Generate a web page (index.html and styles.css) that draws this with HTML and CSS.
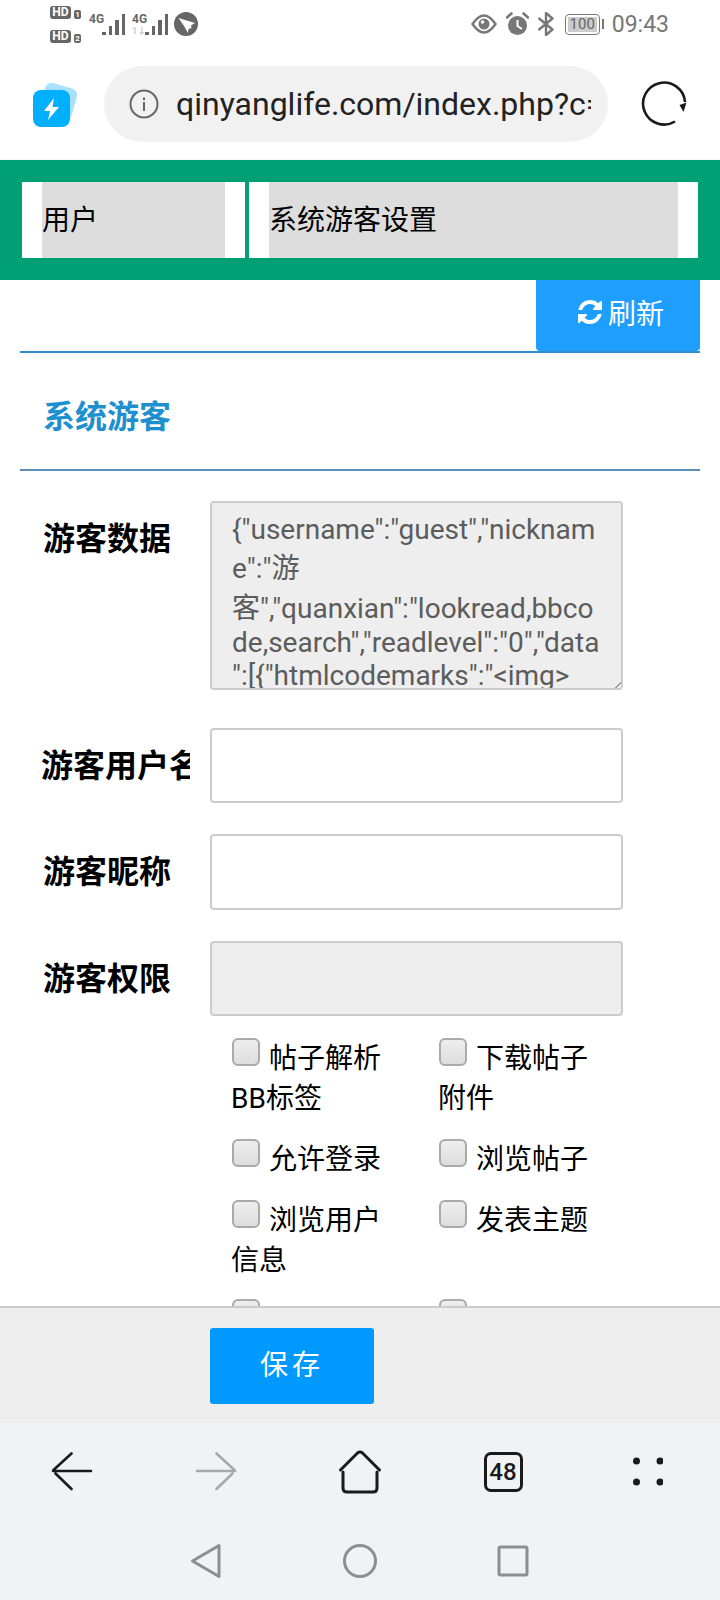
FILE: index.html

```html
<!DOCTYPE html>
<html lang="zh-CN">
<head>
  <meta charset="UTF-8">
  <meta name="viewport" content="width=device-width, initial-scale=1.0">
  <title>系统游客设置</title>
  <link rel="stylesheet" href="styles.css">
</head>
<body>
  <div class="phone">
    <!-- Android status bar -->
    <div class="status-bar">
      <div class="status-left">
        <div class="sims">
          <div class="sim"><span class="hd">HD</span><span class="sim-no">1</span></div>
          <div class="sim"><span class="hd">HD</span><span class="sim-no">2</span></div>
        </div>
        <div class="signal">
          <div class="signal-text"><span>4G</span></div>
          <div class="bars"><i class="b1"></i><i class="b2"></i><i class="b3"></i><i class="b4"></i></div>
        </div>
        <div class="signal">
          <div class="signal-text"><span>4G</span><span class="updown">1↓</span></div>
          <div class="bars"><i class="b1"></i><i class="b2"></i><i class="b3"></i><i class="b4"></i></div>
        </div>
        <svg class="app-dot" width="24" height="24" viewBox="0 0 24 24">
          <circle cx="12" cy="12" r="12" fill="#666"/>
          <path d="M4.500 6 L21 11 L17 13.500 L17.500 16 L14.500 17 L14 21 L10 14 Z" fill="#fff"/>
        </svg>
      </div>
      <div class="status-right">
        <svg width="26" height="20" viewBox="0 0 26 20">
          <path d="M1.500 10 C6 3.500 9.500 1.500 13 1.500 S20 3.500 24.500 10 C20 16.500 16.500 18.500 13 18.500 S6 16.500 1.500 10 Z" fill="none" stroke="#777" stroke-width="2.400"/>
          <circle cx="13" cy="10" r="5.500" fill="#777"/>
          <circle cx="11.500" cy="8" r="1.800" fill="#fff"/>
        </svg>
        <svg class="alarm" width="23" height="24" viewBox="0 0 23 24">
          <circle cx="11.500" cy="13.500" r="9.500" fill="#777"/>
          <path d="M11.500 8 V14 L16 17" fill="none" stroke="#fff" stroke-width="2"/>
          <path d="M1 5.500 L5.500 1.500 M22 5.500 L17.500 1.500" stroke="#777" stroke-width="2.600" stroke-linecap="round"/>
        </svg>
        <svg class="bt" width="18" height="24" viewBox="0 0 18 24">
          <path d="M1.500 6 L15.500 17.500 L9 23 V1 L15.500 6.500 L1.500 18" fill="none" stroke="#777" stroke-width="2.400" stroke-linejoin="round"/>
        </svg>
        <div class="battery"><span class="battery-level">100</span></div>
        <span class="battery-nub"></span>
        <span class="clock">09:43</span>
      </div>
    </div>

    <!-- browser address bar -->
    <div class="browser-bar">
      <svg class="logo" width="46" height="44" viewBox="0 0 46 44">
        <rect x="9" y="2" width="33" height="33" rx="7" fill="#a9dfff" transform="rotate(16 25 18)"/>
        <rect x="0" y="7" width="37" height="37" rx="8" fill="#00b0ff"/>
        <path d="M21 15 L11 28 H17 L15 37 L26 24 H19.500 Z" fill="#fff"/>
      </svg>
      <div class="url-pill">
        <svg class="info" width="30" height="30" viewBox="0 0 30 30">
          <circle cx="15" cy="15" r="13.500" fill="none" stroke="#666" stroke-width="2"/>
          <rect x="14" y="13" width="2" height="9" fill="#666"/>
          <rect x="14" y="8.500" width="2" height="2.500" fill="#666"/>
        </svg>
        <div class="url">qinyanglife.com/index.php?c=user</div>
      </div>
      <svg class="reload" width="48" height="48" viewBox="0 0 48 48">
        <path d="M35 41.500 A21 21 0 1 1 45 22" fill="none" stroke="#1a1a1a" stroke-width="2.600"/>
        <path d="M39.500 25 L46.500 22.500 L43.500 32 Z" fill="#1a1a1a"/>
      </svg>
    </div>

    <div class="page">
      <div class="tabs">
        <div class="tab tab-user"><div class="tab-inner">用户</div></div>
        <div class="tab tab-setting"><div class="tab-inner">系统游客设置</div></div>
      </div>

      <div class="toolbar">
        <div class="refresh-btn">
          <svg width="24" height="24" viewBox="0 0 1536 1536"><path fill="#fff" d="M1511 928q0 5-1 7-64 268-268 434.500T764 1536q-146 0-282.500-55T238 1324l-129 129q-19 19-45 19t-45-19-19-45V960q0-26 19-45t45-19h448q26 0 45 19t19 45-19 45l-137 137q71 66 161 102t187 36q134 0 250-65t186-179q11-17 53-117 8-23 30-23h192q13 0 22.500 9.500t9.500 22.500zm25-800v448q0 26-19 45t-45 19h-448q-26 0-45-19t-19-45 19-45l138-138Q969 256 768 256q-134 0-250 65T332 500q-11 17-53 117-8 23-30 23H50q-13 0-22.500-9.500T18 608v-7q65-268 270-434.500T768 0q146 0 284 55.500T1297 212l130-129q19-19 45-19t45 19 19 45z"/></svg>
          <span>刷新</span>
        </div>
      </div>

      <h2 class="section-title">系统游客</h2>

      <div class="form">
        <div class="form-row">
          <label class="form-label">游客数据</label>
          <textarea class="field field-area" readonly>{"username":"guest","nickname":"游客","quanxian":"lookread,bbcode,search","readlevel":"0","data":[{"htmlcodemarks":"&lt;img&gt; src=\"\" alt=\"\"","ubbcodemarks":"[img]"}]}</textarea>
        </div>
        <div class="form-row">
          <label class="form-label form-label-long">游客用户名</label>
          <input class="field" type="text">
        </div>
        <div class="form-row">
          <label class="form-label">游客昵称</label>
          <input class="field" type="text">
        </div>
        <div class="form-row">
          <label class="form-label">游客权限</label>
          <input class="field field-readonly" type="text" readonly>
        </div>

        <div class="checks">
          <label class="check"><input type="checkbox">帖子解析BB标签</label>
          <label class="check"><input type="checkbox">下载帖子附件</label>
          <label class="check"><input type="checkbox">允许登录</label>
          <label class="check"><input type="checkbox">浏览帖子</label>
          <label class="check"><input type="checkbox">浏览用户信息</label>
          <label class="check"><input type="checkbox">发表主题</label>
          <label class="check"><input type="checkbox"></label>
          <label class="check"><input type="checkbox"></label>
        </div>
      </div>
    </div>

    <div class="save-bar">
      <button class="save-btn">保存</button>
    </div>

    <!-- browser toolbar -->
    <div class="browser-nav">
      <div class="nav-item">
        <svg width="44" height="40" viewBox="0 0 44 40">
          <path d="M3 19 H41 M21.500 1.500 L3.500 18 M5.500 21.500 L21.500 37" fill="none" stroke="#1a1a1a" stroke-width="2.600" stroke-linecap="round"/>
        </svg>
      </div>
      <div class="nav-item">
        <svg width="44" height="40" viewBox="0 0 44 40">
          <path d="M3 19 H41 M22.500 1.500 L40.500 18 M38.500 21.500 L22.500 37" fill="none" stroke="#a8a8a8" stroke-width="2.600" stroke-linecap="round"/>
        </svg>
      </div>
      <div class="nav-item">
        <svg width="48" height="44" viewBox="0 0 48 44">
          <path d="M4.500 20 L21.500 3 Q24 1 26.500 3 L43.500 20 M7 22 V38 Q7 42 11 42 H37 Q41 42 41 38 V22" fill="none" stroke="#1a1a1a" stroke-width="3" stroke-linecap="round" stroke-linejoin="round"/>
        </svg>
      </div>
      <div class="nav-item"><span class="tab-count">48</span></div>
      <div class="nav-item">
        <svg width="30" height="30" viewBox="0 0 30 30">
          <circle cx="3.500" cy="4" r="3.500" fill="#1a1a1a"/>
          <circle cx="27" cy="4" r="3.500" fill="#1a1a1a"/>
          <circle cx="3.500" cy="25" r="3.500" fill="#1a1a1a"/>
          <circle cx="27" cy="25" r="3.500" fill="#1a1a1a"/>
        </svg>
      </div>
    </div>

    <!-- Android navigation keys -->
    <div class="system-nav">
      <div class="sys-key">
        <svg width="32" height="36" viewBox="0 0 32 36">
          <path d="M29 2.500 L2.500 18 L29 33.500 Z" fill="none" stroke="#8e8e8e" stroke-width="3" stroke-linejoin="round"/>
        </svg>
      </div>
      <div class="sys-key">
        <svg width="36" height="36" viewBox="0 0 36 36">
          <circle cx="18" cy="18" r="15.500" fill="none" stroke="#8e8e8e" stroke-width="3"/>
        </svg>
      </div>
      <div class="sys-key">
        <svg class="key-square" width="32" height="32" viewBox="0 0 32 32">
          <rect x="2" y="2" width="28" height="28" rx="1.500" fill="none" stroke="#8e8e8e" stroke-width="3"/>
        </svg>
      </div>
    </div>
  </div>
</body>
</html>
```

FILE: styles.css

```css
* {
  box-sizing: border-box;
}

body {
  margin: 0;
  background-color: #fff;
  font-family: Roboto, "Noto Sans CJK SC", sans-serif;
  color: #000;
}

.phone {
  display: flex;
  flex-direction: column;
  width: 720px;
  height: 1600px;
  overflow: hidden;
}

/* status bar */
.status-bar {
  display: flex;
  justify-content: space-between;
  height: 48px;
  flex: none;
}

.status-left {
  display: flex;
  align-items: flex-start;
  padding: 6px 0 0 50px;
}

.sims {
  display: flex;
  flex-direction: column;
  gap: 11px;
  width: 39px;
}

.sim {
  display: flex;
  align-items: flex-end;
  gap: 3px;
}

.hd {
  width: 21px;
  height: 13px;
  border-radius: 3px;
  background-color: #666;
  color: #fff;
  font-size: 12px;
  font-weight: 700;
  line-height: 13px;
  text-align: center;
}

.sim-no {
  width: 7px;
  height: 9px;
  border-radius: 2px;
  background-color: #666;
  color: #fff;
  font-size: 8px;
  font-weight: 700;
  line-height: 9px;
  text-align: center;
}

.signal {
  display: flex;
  width: 43px;
  height: 30px;
  margin-top: 7px;
}

.signal-text {
  display: flex;
  flex-direction: column;
  width: 13px;
  color: #666;
  font-size: 12px;
  font-weight: 700;
  line-height: 12px;
}

.updown {
  margin-top: 1px;
  color: #ccc;
  font-size: 9px;
  line-height: 10px;
}

.bars {
  display: flex;
  align-items: flex-end;
  gap: 3px;
  height: 21px;
  margin-top: 1px;
}

.bars i {
  width: 3.500px;
  background-color: #666;
}

.bars .b1 { height: 3px; }
.bars .b2 { height: 9px; }
.bars .b3 { height: 15px; }
.bars .b4 { height: 21px; }

.app-dot {
  margin: 6px 0 0 -1px;
}

.status-right {
  display: flex;
  align-items: center;
  padding-right: 51px;
}

.alarm {
  margin-left: 9px;
}

.bt {
  margin-left: 8px;
}

.battery {
  width: 35px;
  height: 21px;
  margin-left: 10px;
  padding: 2px;
  border: 1.500px solid #777;
  border-radius: 4px;
}

.battery-level {
  display: block;
  height: 100%;
  background-color: #ccc;
  color: #666;
  font-size: 15px;
  line-height: 14px;
  text-align: center;
}

.battery-nub {
  width: 2px;
  height: 10px;
  margin-left: 2px;
  background-color: #777;
}

.clock {
  margin-left: 8px;
  color: #777;
  font-size: 23px;
}

/* address bar */
.browser-bar {
  display: flex;
  align-items: center;
  height: 112px;
  flex: none;
  padding-left: 33px;
  border-bottom: 1px solid #effcfb;
}

.logo {
  flex: none;
  margin-top: 2px;
}

.url-pill {
  display: flex;
  align-items: center;
  width: 504px;
  height: 76px;
  margin-left: 25px;
  padding-left: 25px;
  border-radius: 38px;
  background-color: #f1f1f1;
}

.info {
  flex: none;
}

.url {
  width: 415px;
  margin-left: 17px;
  overflow: hidden;
  color: #222;
  font-size: 32px;
  white-space: nowrap;
}

.reload {
  flex: none;
  margin-left: 32px;
}

/* page */
.page {
  flex: 1;
  min-height: 0;
  overflow: hidden;
}

.tabs {
  display: flex;
  gap: 4px;
  height: 120px;
  padding: 22px;
  background-color: #019f74;
}

.tab {
  padding: 0 20px;
  background-color: #fff;
}

.tab-user {
  width: 223px;
}

.tab-setting {
  width: 449px;
}

.tab-inner {
  height: 100%;
  background-color: #ddd;
  font-size: 28px;
  line-height: 78px;
}

.toolbar {
  display: flex;
  justify-content: flex-end;
  height: 73px;
  margin: 0 20px;
  border-bottom: 2px solid #2d8fd0;
}

.refresh-btn {
  display: flex;
  align-items: center;
  justify-content: center;
  gap: 6px;
  width: 164px;
  height: 71px;
  padding: 0 0 8px 6px;
  border-radius: 0 0 4px 4px;
  background-color: #1e9fff;
  color: #fff;
  font-size: 28px;
}

.section-title {
  height: 118px;
  margin: 0 20px;
  padding-left: 23px;
  border-bottom: 2px solid #5b8fb8;
  color: #1e90d0;
  font-size: 32px;
  font-weight: 700;
  line-height: 128px;
}

.form {
  padding-top: 30px;
}

.form-row {
  display: flex;
  margin-bottom: 31px;
}

.form-label {
  width: 190px;
  flex: none;
  height: 46px;
  margin: 15px 20px 0 0;
  padding-left: 43px;
  overflow: hidden;
  font-size: 32px;
  font-weight: 700;
  line-height: 46px;
  white-space: nowrap;
}

.form-label-long {
  padding-left: 41px;
}

.field {
  width: 413px;
  height: 75.330px;
  padding: 12px 20px;
  border: 2px solid #ccc;
  border-radius: 4px;
  background-color: #fff;
  color: #5c5c5c;
  font-family: Roboto, "Noto Sans CJK SC", sans-serif;
  font-size: 28px;
  outline: none;
}

.field-area {
  display: block;
  height: 189px;
  margin-bottom: 7px;
  padding-top: 10px;
  background-color: #eee;
  scrollbar-width: none;
}

.field-area::-webkit-resizer {
  background: linear-gradient(135deg, transparent 78%, #999 78%, #999 84%, transparent 84%);
}

.field-readonly {
  background-color: #eee;
}

.checks {
  display: grid;
  grid-template-columns: 207px 207px;
  row-gap: 21px;
  margin: -11px 0 0 231px;
}

.check {
  width: 172px;
  font-size: 28px;
}

.check input {
  appearance: none;
  width: 28px;
  height: 28px;
  margin: 0 9px 0 1px;
  border: 2px solid #aaa;
  border-radius: 6px;
  background: linear-gradient(#eee, #ddd);
  vertical-align: 2px;
}

/* save bar */
.save-bar {
  flex: none;
  height: 117px;
  padding: 20px 0 0 210px;
  border-top: 2px solid #ccc;
  background-color: #eee;
}

.save-btn {
  display: block;
  width: 164px;
  height: 76px;
  padding: 0 0 6px;
  border: 0;
  border-radius: 3px;
  background-color: #0099ff;
  color: #fff;
  font-family: Roboto, "Noto Sans CJK SC", sans-serif;
  font-size: 28px;
  letter-spacing: 4px;
}

/* browser toolbar */
.browser-nav {
  display: grid;
  grid-template-columns: repeat(5, 144px);
  height: 98px;
  flex: none;
  background-color: #f1f2f4;
}

.nav-item {
  display: flex;
  align-items: center;
  justify-content: center;
}

.tab-count {
  width: 39px;
  height: 40px;
  margin-right: 2px;
  border: 3px solid #1a1a1a;
  border-radius: 7px;
  color: #1a1a1a;
  font-size: 24px;
  font-weight: 500;
  line-height: 34px;
  text-align: center;
}

.system-nav {
  display: flex;
  justify-content: center;
  height: 79px;
  flex: none;
  background-color: #f1f2f4;
}

.sys-key {
  display: flex;
  align-items: center;
  justify-content: center;
  width: 154px;
}

.key-square {
  margin-right: 3px;
}
```
